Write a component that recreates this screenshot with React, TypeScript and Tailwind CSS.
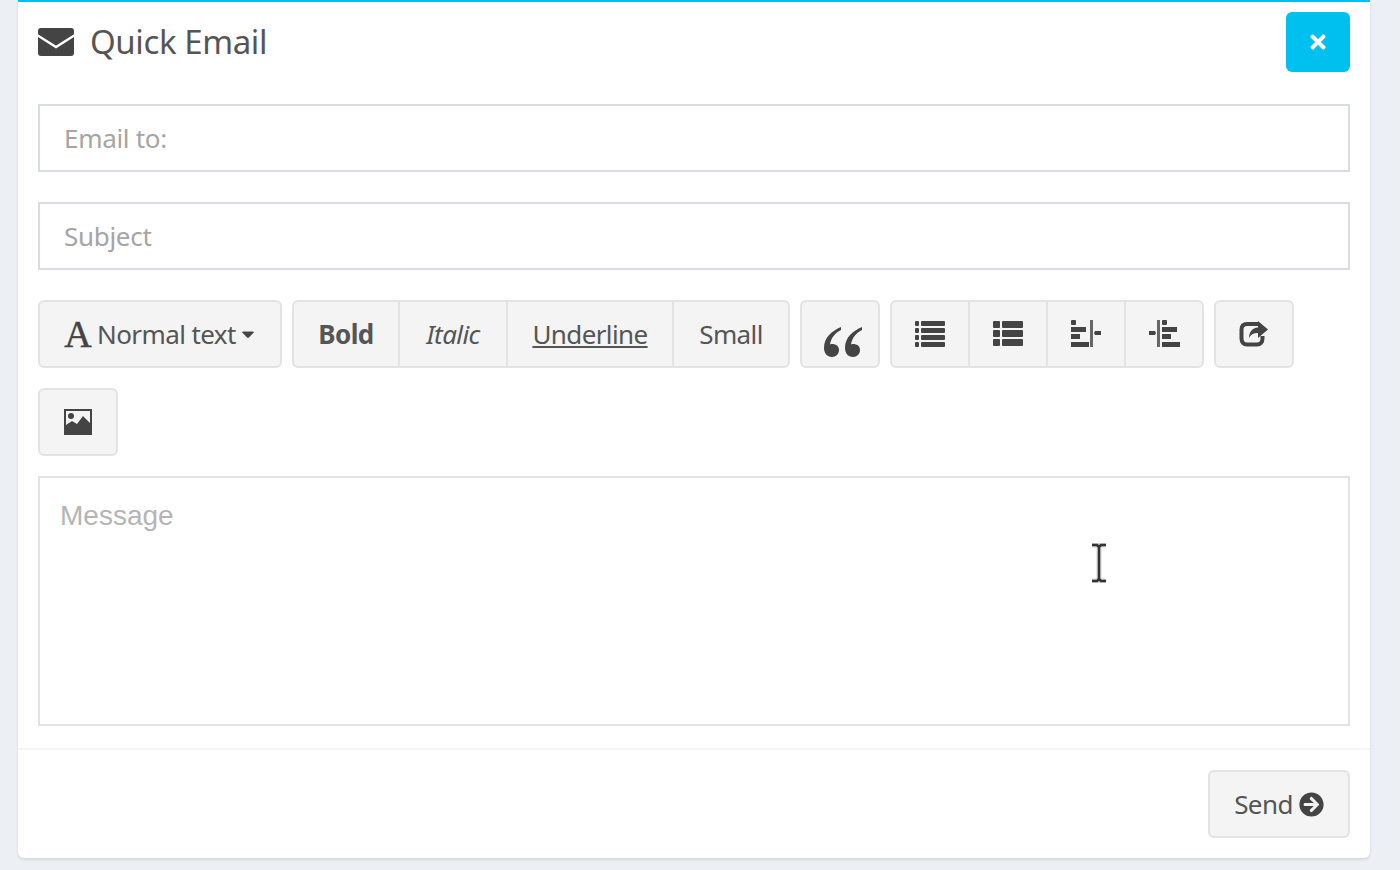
import React from 'react'
import { FaTimes, FaArrowCircleRight, FaCaretDown } from 'react-icons/fa'

const font = "font-['Noto_Sans',sans-serif]"
const btn = 'flex h-[68px] items-center justify-center bg-[#f4f4f4] border-2 border-[#e3e3e3] text-[#555] text-[26px] tracking-[-0.6px]'
const input = 'block h-[68px] w-full border-2 border-[#d9dce3] bg-white px-[24px] text-[26px] tracking-[-0.3px] text-[#444] outline-none placeholder:text-[#a5a5a5]'

const EnvelopeIcon = () => (
    <svg width="36" height="28" viewBox="0 0 36 28">
        <rect x="0" y="0" width="36" height="28" rx="3" fill="#444" />
        <path d="M-1 7l19 12L37 7" fill="none" stroke="#fff" strokeWidth="2.500" />
    </svg>
)

const ListIcon = () => (
    <svg width="30" height="28" viewBox="0 0 30 28" fill="#444">
        <rect x="0" y="1" width="4" height="5" rx="1" />
        <rect x="6" y="1" width="24" height="5" rx="1" />
        <rect x="0" y="8" width="4" height="5" rx="1" />
        <rect x="6" y="8" width="24" height="5" rx="1" />
        <rect x="0" y="15" width="4" height="5" rx="1" />
        <rect x="6" y="15" width="24" height="5" rx="1" />
        <rect x="0" y="22" width="4" height="5" rx="1" />
        <rect x="6" y="22" width="24" height="5" rx="1" />
    </svg>
)

const ThListIcon = () => (
    <svg width="30" height="28" viewBox="0 0 30 28" fill="#444">
        <rect x="0" y="1" width="7" height="7" rx="1" />
        <rect x="9" y="1" width="21" height="7" rx="1" />
        <rect x="0" y="10" width="7" height="7" rx="1" />
        <rect x="9" y="10" width="21" height="7" rx="1" />
        <rect x="0" y="19" width="7" height="7" rx="1" />
        <rect x="9" y="19" width="21" height="7" rx="1" />
    </svg>
)

const IndentLeftIcon = () => (
    <svg width="32" height="28" viewBox="0 0 32 28" fill="#444">
        <rect x="1" y="0" width="5" height="5" rx="1" />
        <rect x="1" y="7" width="15" height="5" />
        <rect x="1" y="14" width="9" height="5" />
        <rect x="1" y="22" width="18" height="5" />
        <rect x="20" y="0" width="3" height="27" opacity="0.8" />
        <path d="M25 11h6v4h-6l-1-2z" />
    </svg>
)

const IndentRightIcon = () => (
    <svg width="32" height="28" viewBox="0 0 32 28" fill="#444">
        <rect x="14" y="0" width="5" height="5" rx="1" />
        <rect x="14" y="7" width="15" height="5" />
        <rect x="14" y="14" width="9" height="5" />
        <rect x="14" y="22" width="18" height="5" />
        <rect x="9" y="0" width="3" height="27" opacity="0.8" />
        <path d="M1 11h6l1 2-1 2H1z" />
    </svg>
)

const QuoteIcon = () => (
    <svg width="38" height="30" viewBox="0 0 38 30" fill="#444">
        <path d="M17 0C8 4 0 10 0 21c0 5 3 9 8 9 4 0 7-3 7-7s-3-6-7-6c-1 0-1 0-2 .5C7 11 11 6 17 3z" />
        <path d="M38 0c-9 4-17 10-17 21 0 5 3 9 8 9 4 0 7-3 7-7s-3-6-7-6c-1 0-1 0-2 .5C28 11 32 6 38 3z" />
    </svg>
)

const ShareIcon = () => (
    <svg width="30" height="28" viewBox="0 0 30 28" fill="none">
        <path d="M19 4H8C4.500 4 2.500 6 2.500 9.500v9C2.500 22 4.500 24.500 8 24.500h10c3.500 0 5.500-2.500 5.500-6V16" stroke="#444" strokeWidth="4" />
        <path d="M19 1l10 8.500-10 8.500v-5c-4 0-7 1-9 5 0-6 3-10 9-10.500z" fill="#444" />
    </svg>
)

const PictureIcon = () => (
    <svg width="28" height="26" viewBox="0 0 28 26" fill="#444">
        <path fillRule="evenodd" d="M0 0h28v26H0zM2 2v14l6-4 5 3 6-8 7 7V2z" />
        <circle cx="7" cy="7" r="3" />
    </svg>
)

// i-beam mouse pointer sitting over the textarea
const TextCursor = () => (
    <svg width="18" height="40" viewBox="0 0 18 40" className="absolute left-[1052px] top-[67px]">
        <path d="M2 2h5l2 2 2-2h5M9 4v32M2 38h5l2-2 2 2h5" fill="none" stroke="#bbb" strokeWidth="5" opacity="0.6" />
        <path d="M2 2h5l2 2 2-2h5M9 4v32M2 38h5l2-2 2 2h5" fill="none" stroke="#333" strokeWidth="2.500" />
    </svg>
)

export default function App() {
    return (
        <div className={`${font} h-[870px] overflow-hidden bg-[#ecf0f5] pl-[18px] pr-[30px]`}>
            <div className="h-[858px] rounded-b-[6px] border-t-2 border-[#00c0ef] bg-white shadow-[0_2px_3px_rgba(0,0,0,0.1)]">
                <div className="flex items-start justify-between px-[20px] pt-[10px]">
                    <div className="flex h-[60px] items-center text-[#555]">
                        <EnvelopeIcon />
                        <span className="ml-[16px] text-[33px] tracking-[-0.4px]">Quick Email</span>
                    </div>
                    <button className="flex h-[60px] w-[64px] items-center justify-center rounded-[6px] bg-[#00c0ef] text-white">
                        <FaTimes className="h-[22px] w-[22px]" />
                    </button>
                </div>

                <div className="px-[20px] pt-[32px]">
                    <input className={input} placeholder="Email to:" />
                    <input className={`${input} mt-[30px]`} placeholder="Subject" />

                    <div className="mt-[30px] flex flex-wrap gap-x-[10px] gap-y-[20px]">
                        <button className={`${btn} w-[244px] rounded-[6px]`}>
                            <span className="font-['Liberation_Serif',serif] text-[38px] leading-none text-[#444] [-webkit-text-stroke:0.5px_#444]">A</span>
                            <span className="ml-[6px]">Normal text</span>
                            <FaCaretDown className="ml-[4px] h-[20px] w-[16px] text-[#444]" />
                        </button>

                        <div className="flex">
                            <button className={`${btn} w-[108px] rounded-l-[6px] font-bold`}>Bold</button>
                            <button className={`${btn} -ml-[2px] w-[110px] italic`}>Italic</button>
                            <button className={`${btn} -ml-[2px] w-[168px] underline`}>Underline</button>
                            <button className={`${btn} -ml-[2px] w-[118px] rounded-r-[6px]`}>Small</button>
                        </div>

                        <button className={`${btn} w-[80px] rounded-[6px] pl-[6px] pt-[16px]`}>
                            <QuoteIcon />
                        </button>

                        <div className="flex">
                            <button className={`${btn} w-[80px] rounded-l-[6px]`}><ListIcon /></button>
                            <button className={`${btn} -ml-[2px] w-[80px]`}><ThListIcon /></button>
                            <button className={`${btn} -ml-[2px] w-[80px]`}><IndentLeftIcon /></button>
                            <button className={`${btn} -ml-[2px] w-[80px] rounded-r-[6px]`}><IndentRightIcon /></button>
                        </div>

                        <button className={`${btn} w-[80px] rounded-[6px]`}><ShareIcon /></button>
                        <button className={`${btn} w-[80px] rounded-[6px]`}><PictureIcon /></button>
                    </div>

                    <div className="relative mt-[20px]">
                        <textarea
                            className="block h-[250px] w-full resize-none border-2 border-[#e3e3e3] bg-white px-[20px] py-[20px] font-['Liberation_Sans',sans-serif] text-[28px] leading-[36px] outline-none placeholder:text-[#b5b5b5]"
                            placeholder="Message"
                        />
                        <TextCursor />
                    </div>
                </div>

                <div className="mt-[22px] flex justify-end border-t-2 border-[#f4f4f4] px-[20px] pt-[20px]">
                    <button className={`${btn} w-[142px] rounded-[6px]`}>
                        Send
                        <FaArrowCircleRight className="ml-[6px] h-[25px] w-[25px] text-[#444]" />
                    </button>
                </div>
            </div>
        </div>
    )
}
